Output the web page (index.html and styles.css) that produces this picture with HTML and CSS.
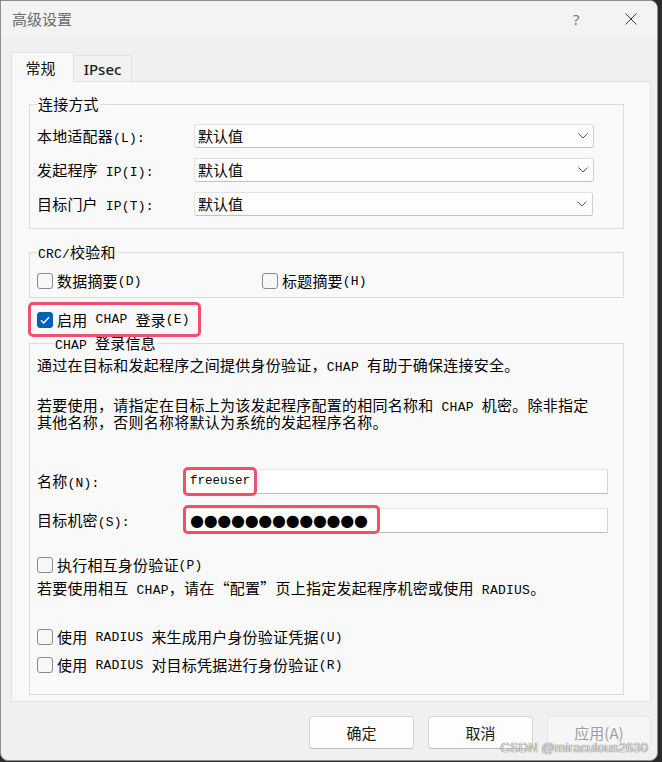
FILE: index.html
```html
<!DOCTYPE html>
<html lang="zh-CN">
<head>
<meta charset="utf-8">
<title>高级设置</title>
<link rel="stylesheet" href="styles.css">
</head>
<body>
<div class="window">
  <div class="titlebar">
    <span class="title">高级设置</span>
    <span class="help">?</span>
    <span class="close"><svg width="12" height="12" viewBox="0 0 12 12"><path d="M0.5 0.5 L11.5 11.5 M11.5 0.5 L0.5 11.5" stroke="#3c3c3c" stroke-width="1" fill="none"/></svg></span>
  </div>
  <div class="client">
    <div class="tabs">
      <div class="tab active">常规</div>
      <div class="tab">IPsec</div>
    </div>
    <div class="panel">
      <fieldset class="group g1">
        <legend>连接方式</legend>
        <div class="grid">
          <label class="lbl">本地适配器<span class="m">(L):</span></label>
          <div class="select">默认值<svg class="chev" width="10" height="6" viewBox="0 0 10 6"><path d="M0.5 0.5 L5 5 L9.5 0.5" stroke="#555" stroke-width="1" fill="none"/></svg></div>
          <label class="lbl">发起程序<span class="m"> IP(I):</span></label>
          <div class="select">默认值<svg class="chev" width="10" height="6" viewBox="0 0 10 6"><path d="M0.5 0.5 L5 5 L9.5 0.5" stroke="#555" stroke-width="1" fill="none"/></svg></div>
          <label class="lbl">目标门户<span class="m"> IP(T):</span></label>
          <div class="select short">默认值<svg class="chev" width="10" height="6" viewBox="0 0 10 6"><path d="M0.5 0.5 L5 5 L9.5 0.5" stroke="#555" stroke-width="1" fill="none"/></svg></div>
        </div>
      </fieldset>

      <fieldset class="group g2">
        <legend><span class="m">CRC/</span>校验和</legend>
        <div class="checks">
          <div class="cb"><span class="box"></span>数据摘要<span class="m">(D)</span></div>
          <div class="cb second"><span class="box"></span>标题摘要<span class="m">(H)</span></div>
        </div>
      </fieldset>

      <div class="mark">
        <div class="cb"><span class="box checked"><svg width="14" height="14" viewBox="0 0 14 14"><path d="M3 7.2 L5.8 10 L11 4.3" stroke="#fff" stroke-width="1.3" fill="none"/></svg></span>启用<span class="m"> CHAP </span>登录<span class="m">(E)</span></div>
      </div>

      <fieldset class="group g3">
        <legend><span class="m">CHAP </span>登录信息</legend>
        <p class="txt">通过在目标和发起程序之间提供身份验证，<span class="m">CHAP </span>有助于确保连接安全。</p>
        <p class="txt p2">若要使用，请指定在目标上为该发起程序配置的相同名称和<span class="m"> CHAP </span>机密。除非指定<br>其他名称，否则名称将默认为系统的发起程序名称。</p>
        <div class="field f-name">
          <label class="lbl">名称<span class="m">(N):</span></label>
          <div class="inputwrap">
            <div class="input"><span class="m val">freeuser</span></div>
            <div class="redbox rb-name"></div>
          </div>
        </div>
        <div class="field f-secret">
          <label class="lbl">目标机密<span class="m">(S):</span></label>
          <div class="inputwrap">
            <div class="input"><span class="dots">●●●●●●●●●●●●●</span></div>
            <div class="redbox rb-secret"></div>
          </div>
        </div>
        <div class="cb c-mutual"><span class="box"></span>执行相互身份验证<span class="m">(P)</span></div>
        <p class="txt t-mutual">若要使用相互<span class="m"> CHAP</span>，请在“配置”页上指定发起程序机密或使用<span class="m"> RADIUS</span>。</p>
        <div class="cb c-r1"><span class="box"></span>使用<span class="m"> RADIUS </span>来生成用户身份验证凭据<span class="m">(U)</span></div>
        <div class="cb c-r2"><span class="box"></span>使用<span class="m"> RADIUS </span>对目标凭据进行身份验证<span class="m">(R)</span></div>
      </fieldset>
    </div>
    <div class="footer">
      <button class="btn">确定</button>
      <button class="btn">取消</button>
      <button class="btn disabled">应用(A)</button>
    </div>
  </div>
  <div class="watermark">CSDN @miraculous2630</div>
</div>
</body>
</html>
```

FILE: styles.css
```css
html, body {
  margin: 0;
  padding: 0;
}
body {
  background: #2b2b2b;
  width: 662px;
  height: 762px;
  overflow: hidden;
  font-family: "Noto Sans CJK SC", "Noto Sans", sans-serif;
  font-size: 15px;
  color: #000;
}
.window {
  position: relative;
  width: 656px;
  height: 759px;
  border: 1px solid #8e8e8e;
  border-radius: 0 8px 8px 8px;
  background: #f0f0f0;
  display: flex;
  flex-direction: column;
  overflow: hidden;
}
.titlebar {
  height: 36px;
  padding-bottom: 2px;
  background: #f3f3f3;
  display: flex;
  align-items: center;
  padding-left: 11px;
  flex: none;
}
.title {
  color: #6a6a6a;
  font-size: 15px;
  line-height: 20px;
  flex: 1;
}
.help {
  color: #777;
  font-family: "Noto Sans", sans-serif;
  font-size: 15px;
  line-height: 20px;
  width: 52px;
}
.close {
  display: flex;
  width: 32px;
}
.client {
  flex: 1;
  padding: 13px 6px 0 10px;
  display: flex;
  flex-direction: column;
}
.tabs {
  display: flex;
  align-items: flex-end;
  height: 30px;
  margin-bottom: -1px;
  position: relative;
  z-index: 1;
}
.tab {
  box-sizing: border-box;
  border: 1px solid #e3e3e3;
  border-bottom: none;
  display: flex;
  align-items: center;
  justify-content: center;
}
.tab.active {
  width: 63px;
  height: 30px;
  background: #f9f9f9;
  font-size: 15px;
  color: #111;
  padding-right: 4px;
}
.tab:not(.active) {
  width: 58px;
  height: 27px;
  background: #f2f2f2;
  border-left: none;
  font-family: "Noto Sans", sans-serif;
  font-weight: 500;
  font-size: 15px;
  color: #222;
  border-bottom: 1px solid #e3e3e3;
}
.panel {
  background: #f9f9f9;
  border: 1px solid #e3e3e3;
  padding: 14px 26px 6px 17px;
  width: 595px;
}
.m {
  font-family: "Liberation Mono", monospace;
  font-size: 13px;
  line-height: 1;
  white-space: pre;
}
.group {
  margin: 0;
  border: 1px solid #dcdcdc;
  padding: 12px 29px 12px 7px;
  min-width: 0;
}
.group legend {
  padding: 0 1px;
  line-height: 16px;
  font-size: 15px;
  letter-spacing: 0.2px;
}
.grid {
  display: grid;
  grid-template-columns: 157px 400px;
  row-gap: 10px;
  align-items: center;
}
.lbl {
  line-height: 16px;
  letter-spacing: 0.2px;
}
.select {
  box-sizing: border-box;
  height: 24px;
  background: #fdfdfd;
  border: 1px solid #e2e2e2;
  border-bottom-color: #c2c2c2;
  border-right-color: #d0d0d0;
  border-radius: 3px;
  display: flex;
  align-items: center;
  padding: 0 5px 0 3px;
  line-height: 16px;
}
.select.short {
  width: 399px;
}
.chev {
  margin-left: auto;
}
.g2 {
  margin-top: 15px;
  padding-top: 12px;
  padding-bottom: 8px;
}
.checks {
  display: flex;
}
.cb {
  display: flex;
  align-items: center;
  line-height: 16px;
  height: 16px;
  letter-spacing: 0.2px;
}
.checks .cb:first-child {
  width: 225px;
}
.box {
  box-sizing: border-box;
  width: 16px;
  height: 16px;
  border: 1px solid #8a8a8a;
  border-radius: 3px;
  background: #f7f7f7;
  margin-right: 4px;
  flex: none;
  display: flex;
  align-items: center;
  justify-content: center;
}
.box.checked {
  background: #005fb8;
  border-color: #005fb8;
}
.mark {
  box-sizing: border-box;
  margin-top: 4px;
  margin-left: -1px;
  width: 173px;
  height: 35px;
  border: 3px solid #f0506a;
  border-radius: 5px;
  display: flex;
  align-items: center;
  padding-left: 6px;
  position: relative;
  z-index: 1;
}
.g3 {
  margin-top: -2px;
  padding: 5px 15px 21px 7px;
}
.g3 legend {
  margin-left: 17px;
}
.txt {
  margin: 0;
  line-height: 16px;
  letter-spacing: 0.25px;
}
.p2 {
  margin-top: 23px;
}
.field {
  display: flex;
  align-items: center;
}
.field .lbl {
  width: 146px;
  flex: none;
}
.f-name {
  margin-top: 39px;
}
.f-secret {
  margin-top: 14px;
}
.inputwrap {
  position: relative;
  width: 425px;
}
.input {
  box-sizing: border-box;
  height: 25px;
  background: #fff;
  border: 1px solid #e6e6e6;
  border-bottom-color: #bdbdbd;
  border-right-color: #d4d4d4;
  display: flex;
  align-items: center;
  padding-left: 6px;
}
.val {
  font-size: 12.5px;
}
.dots {
  font-family: "DejaVu Sans", sans-serif;
  font-size: 16px;
  line-height: 16px;
  letter-spacing: -0.3px;
}
.redbox {
  position: absolute;
  box-sizing: border-box;
  border: 3px solid #f0506a;
  border-radius: 5px;
  left: 0;
}
.rb-name {
  top: -2px;
  width: 74px;
  height: 29px;
}
.rb-secret {
  top: -3px;
  width: 197px;
  height: 29px;
}
.c-mutual {
  margin-top: 24px;
}
.t-mutual {
  margin-top: 7px;
}
.c-r1 {
  margin-top: 32px;
}
.c-r2 {
  margin-top: 12px;
}
.footer {
  display: flex;
  justify-content: flex-end;
  gap: 14px;
  padding-top: 14px;
}
.btn {
  box-sizing: border-box;
  width: 105px;
  height: 33px;
  background: #fdfdfd;
  border: 1px solid #d6d6d6;
  border-bottom-color: #bcbcbc;
  border-radius: 4px;
  font-family: "Noto Sans CJK SC", sans-serif;
  font-size: 15px;
  color: #1a1a1a;
  padding: 0;
}
.btn.disabled {
  width: 104px;
  background: #f6f6f6;
  border-color: #e6e6e6;
  color: #9e9e9e;
}
.watermark {
  position: absolute;
  right: 9px;
  bottom: 5px;
  font-family: "Liberation Sans", sans-serif;
  font-size: 13px;
  color: #e4e4e4;
  text-shadow: 0 0 1px #6a6a6a, 0 0 1px #6a6a6a;
  letter-spacing: 0.1px;
}
```
